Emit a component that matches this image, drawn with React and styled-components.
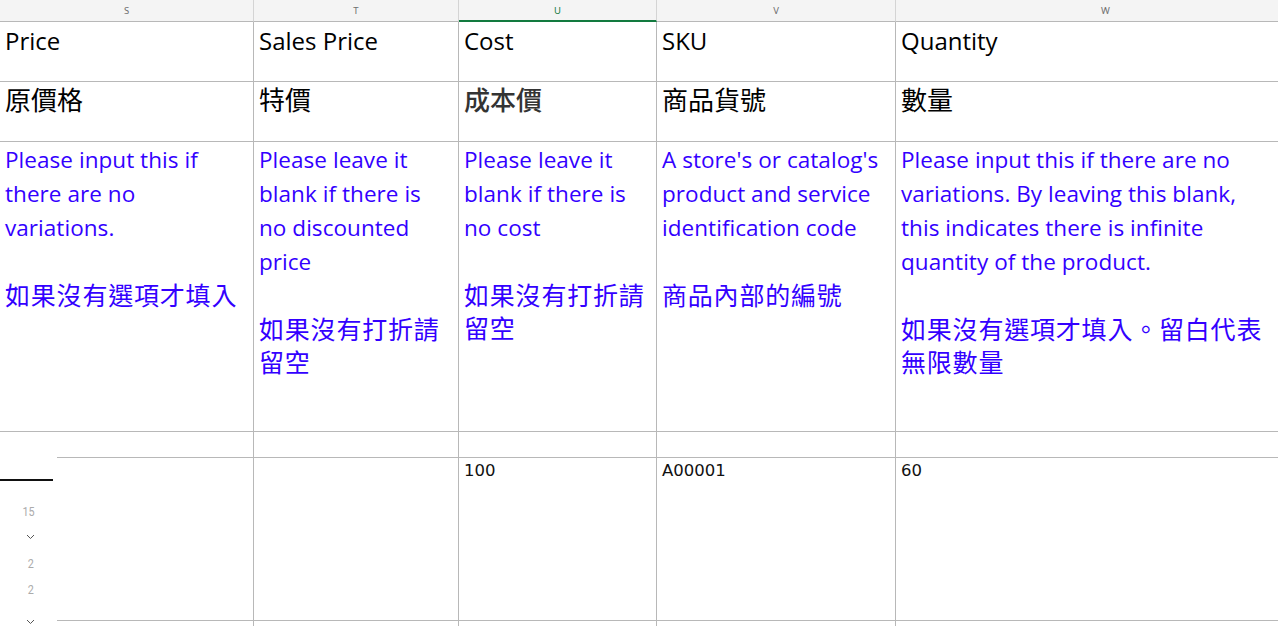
import React from "react";
import styled, { createGlobalStyle } from "styled-components";

const Global = createGlobalStyle`
    html, body { margin: 0; padding: 0; background: #fff; overflow: hidden; }
    body { font-family: "Open Sans", "Noto Sans CJK TC", sans-serif; }
`;

const Page = styled.div`
    position: relative;
    width: 1278px;
    height: 626px;
    overflow: hidden;
`;

const Sheet = styled.div`
    display: grid;
    grid-template-columns: 254px 205px 198px 239px 420px;
    grid-template-rows: 22px 60px 60px 290px 26px 163px 60px;
`;

const ColHead = styled.div`
    box-sizing: border-box;
    background: #f4f4f4;
    border-right: 1px solid #d4d4d4;
    border-bottom: ${p => p.active ? "2px solid #127a3f" : "1px solid #b8b8b8"};
    color: ${p => p.active ? "#127a3f" : "#6f6f6f"};
    font-family: "Noto Sans", sans-serif;
    font-size: 9.5px;
    display: flex;
    align-items: center;
    justify-content: center;
    padding-top: ${p => p.active ? "1px" : "0"};
`;

const Cell = styled.div`
    box-sizing: border-box;
    border-right: 1px solid #b8b8b8;
    border-bottom: 1px solid #b8b8b8;
    padding: 1px 4px 0 5px;
    white-space: nowrap;
`;

const Title = styled.div`
    font-family: "Open Sans", sans-serif;
    font-size: 24px;
    line-height: 36px;
    color: #000;
`;

const ZhTitle = styled.div`
    font-family: "Noto Sans CJK TC", sans-serif;
    font-size: 26px;
    line-height: 32px;
    color: ${p => p.dim ? "#333" : "#000"};
    font-weight: ${p => p.dim ? 500 : 400};
`;

const Note = styled.div`
    font-family: "Open Sans", sans-serif;
    font-size: 22.5px;
    line-height: 34px;
    color: #3300ff;
    font-weight: 500;
    letter-spacing: 0.05px;
`;

const Zh = styled.div`
    font-family: "Noto Sans CJK TC", sans-serif;
    font-size: 25px;
    line-height: 33px;
    color: #3300ff;
    letter-spacing: 0.8px;
`;

const Gap = styled.div`
    height: 33px;
`;

const Value = styled.div`
    font-family: "DejaVu Sans", sans-serif;
    font-size: 16.5px;
    line-height: 20px;
    color: #111;
    margin-top: 2px;
`;

const Picker = styled.div`
    position: absolute;
    left: 0;
    top: 444px;
    width: 57px;
    bottom: 0;
    background: #fff;
    display: flex;
    flex-direction: column;
`;

const Rule = styled.div`
    flex-shrink: 0;
    width: 53px;
    height: 2px;
    background: #111;
    margin-top: 35px;
    margin-bottom: 17px;
`;

const Slot = styled.div`
    flex-shrink: 0;
    height: ${p => p.h}px;
    margin-top: ${p => p.gap || 0}px;
    display: flex;
    align-items: center;
    justify-content: center;
    padding-left: ${p => p.shift || 0}px;
    font-family: Roboto, sans-serif;
    font-size: 13.5px;
    color: #ababab;
`;

const Narrow = styled.span`
    display: inline-block;
    transform: scaleX(0.8);
`;

const Chev = () => (
    <svg width="9" height="6" viewBox="0 0 9 6">
        <polyline points="1,1 4.5,4.5 8,1" fill="none" stroke="#555" strokeWidth="1" />
    </svg>
);

const cols = ["S", "T", "U", "V", "W"];

export default function App() {
    return (
        <Page>
            <Global />
            <Sheet>
                {cols.map(c => <ColHead key={c} active={c === "U"}>{c}</ColHead>)}

                <Cell><Title>Price</Title></Cell>
                <Cell><Title>Sales Price</Title></Cell>
                <Cell><Title>Cost</Title></Cell>
                <Cell><Title>SKU</Title></Cell>
                <Cell><Title>Quantity</Title></Cell>

                <Cell><ZhTitle>原價格</ZhTitle></Cell>
                <Cell><ZhTitle>特價</ZhTitle></Cell>
                <Cell><ZhTitle dim>成本價</ZhTitle></Cell>
                <Cell><ZhTitle>商品貨號</ZhTitle></Cell>
                <Cell><ZhTitle>數量</ZhTitle></Cell>

                <Cell>
                    <Note>Please input this if</Note>
                    <Note>there are no</Note>
                    <Note>variations.</Note>
                    <Gap />
                    <Zh>如果沒有選項才填入</Zh>
                </Cell>
                <Cell>
                    <Note>Please leave it</Note>
                    <Note>blank if there is</Note>
                    <Note>no discounted</Note>
                    <Note>price</Note>
                    <Gap />
                    <Zh>如果沒有打折請</Zh>
                    <Zh>留空</Zh>
                </Cell>
                <Cell>
                    <Note>Please leave it</Note>
                    <Note>blank if there is</Note>
                    <Note>no cost</Note>
                    <Gap />
                    <Zh>如果沒有打折請</Zh>
                    <Zh>留空</Zh>
                </Cell>
                <Cell>
                    <Note>A store's or catalog's</Note>
                    <Note>product and service</Note>
                    <Note>identification code</Note>
                    <Gap />
                    <Zh>商品內部的編號</Zh>
                </Cell>
                <Cell>
                    <Note>Please input this if there are no</Note>
                    <Note>variations. By leaving this blank,</Note>
                    <Note>this indicates there is infinite</Note>
                    <Note>quantity of the product.</Note>
                    <Gap />
                    <Zh>如果沒有選項才填入。留白代表</Zh>
                    <Zh>無限數量</Zh>
                </Cell>

                {cols.map(c => <Cell key={"e" + c} />)}

                <Cell />
                <Cell />
                <Cell><Value>100</Value></Cell>
                <Cell><Value>A00001</Value></Cell>
                <Cell><Value>60</Value></Cell>

                {cols.map(c => <Cell key={"n" + c} />)}
            </Sheet>

            <Picker>
                <Rule />
                <Slot h={26} shift={0}><Narrow>15</Narrow></Slot>
                <Slot h={25} shift={4}><Chev /></Slot>
                <Slot h={27} shift={4}><Narrow>2</Narrow></Slot>
                <Slot h={26} shift={4}><Narrow>2</Narrow></Slot>
                <Slot h={26} gap={7} shift={4}><Chev /></Slot>
            </Picker>
        </Page>
    );
}
